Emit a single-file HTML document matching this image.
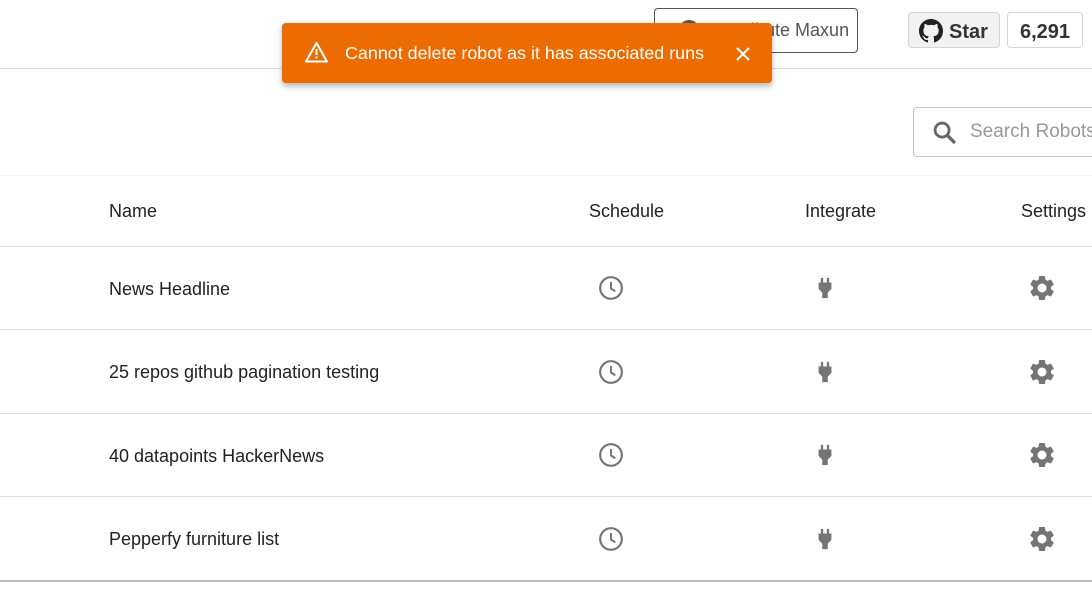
<!DOCTYPE html>
<html><head><meta charset="utf-8"><style>
*{box-sizing:border-box;margin:0;padding:0}
body{width:1092px;height:590px;overflow:hidden;background:#fff;font-family:"Liberation Sans",Roboto,sans-serif;position:relative;color:#222}
.abs{position:absolute}
.hdr{left:0;top:68px;width:1092px;height:1px;background:#ddd}
.contrib{left:654px;top:8px;width:204px;height:45px;border:1px solid #555;border-radius:4px;font-size:18px;color:#555;line-height:43px;padding-left:24px}
.star{left:908px;top:12px;width:92px;height:36px;border:1px solid #d5d5d5;border-radius:4px;background:#f2f2f2;font-weight:bold;font-size:20px;color:#333;line-height:38px}
.count{left:1007px;top:12px;width:76px;height:36px;border:1px solid #d5d5d5;border-radius:4px;background:#fff;font-weight:bold;font-size:20px;color:#333;line-height:38px;text-align:center}
.toast{left:282px;top:23px;width:490px;height:60px;background:#ed6c02;border-radius:4px;box-shadow:0 3px 6px rgba(0,0,0,.3);color:#fff;font-size:17.9px}
.search{left:913px;top:107px;width:200px;height:50px;border:1px solid #c4c4c4;border-radius:4px;font-size:19px;color:#999;line-height:48px;padding-left:56px}
.line{left:0;width:1092px;height:1px;background:#e0e0e0}
.txt{font-size:18px;color:#222}
</style></head><body>
<div class="abs contrib"><span style="display:inline-block;width:20px;height:20px;border-radius:50%;background:#555;vertical-align:-4px;margin-right:8px"></span>Contribute Maxun</div>
<div class="abs star"><svg class="abs" style="left:10px;top:6px" width="24" height="24" viewBox="0 0 16 16"><path fill="#222" d="M8 0C3.58 0 0 3.58 0 8c0 3.540 2.29 6.53 5.47 7.59.4.07.55-.17.55-.38v-1.34c-2.230.48-2.7-1.07-2.7-1.07-.36-.92-.89-1.170-.89-1.17-.73-.5.05-.49.05-.49.8.06 1.23.83 1.23.83.71 1.22 1.87.87 2.33.66.07-.52.28-.87.51-1.07-1.78-.2-3.64-.89-3.64-3.95 0-.87.31-1.59.82-2.15-.08-.2-.36-1.02.08-2.12 0 0 .67-.21 2.2.82a7.6 7.6 0 0 1 4 0c1.53-1.04 2.2-.82 2.2-.82.44 1.1.16 1.92.08 2.12.51.56.82 1.27.82 2.15 0 3.070-1.87 3.75-3.65 3.95.29.25.54.73.54 1.48v2.2c0 .21.15.46.55.38A8.01 8.01 0 0 0 16 8c0-4.42-3.58-8-8-8z"/></svg><span class="abs" style="left:40px;top:0">Star</span></div>
<div class="abs count">6,291</div>
<div class="abs hdr"></div>
<div class="abs toast">
<svg class="abs" style="left:22px;top:18px" width="25" height="22" viewBox="0 0 24 22"><path d="M12 2 L22.5 20.5 H1.5 Z" fill="none" stroke="#fff" stroke-width="2" stroke-linejoin="round"/><rect x="11" y="8" width="2" height="6" fill="#fff"/><rect x="11" y="15.5" width="2" height="2" fill="#fff"/></svg>
<span class="abs" style="left:63px;top:20px">Cannot delete robot as it has associated runs</span>
<svg class="abs" style="left:454px;top:24px" width="14" height="14" viewBox="0 0 14 14"><path d="M1 1L13 13M13 1L1 13" stroke="#fff" stroke-width="2"/></svg>
</div>
<div class="abs search"><svg class="abs" style="left:17px;top:11px" width="28" height="28" viewBox="0 0 24 24"><circle cx="9.5" cy="9.5" r="6" fill="none" stroke="#666" stroke-width="2.4"/><path d="M14 14l6.5 6.5" stroke="#666" stroke-width="2.8"/></svg>Search Robots</div>
<div class="abs line" style="top:175px;background:#f3f3f3"></div>
<div class="abs txt" style="left:109px;top:201px">Name</div>
<div class="abs txt" style="left:589px;top:201px">Schedule</div>
<div class="abs txt" style="left:805px;top:201px">Integrate</div>
<div class="abs txt" style="left:1021px;top:201px">Settings</div>
<div class="abs line" style="top:246px"></div>
<div class="abs line" style="top:329px"></div>
<div class="abs line" style="top:413px"></div>
<div class="abs line" style="top:496px"></div>
<div class="abs line" style="top:580px;height:2px;background:#bbb"></div>

<div class="abs txt" style="left:109px;top:279px">News Headline</div>
<div class="abs txt" style="left:109px;top:362px">25 repos github pagination testing</div>
<div class="abs txt" style="left:109px;top:446px">40 datapoints HackerNews</div>
<div class="abs txt" style="left:109px;top:529px">Pepperfy furniture list</div>

<svg width="0" height="0" style="position:absolute"><defs>
<symbol id="clk" viewBox="0 0 24 24"><circle cx="12" cy="12" r="10" fill="none" stroke="#757575" stroke-width="2"/><path d="M12 6.5V12.5L16 15" fill="none" stroke="#757575" stroke-width="1.8"/></symbol>
<symbol id="plug" viewBox="0 0 24 24"><path fill="#757575" d="M7.5 1h2.5v5h4V1h2.5v5H19v7l-4 4v6H9v-6l-4-4V6h2.5z"/></symbol>
<symbol id="gear" viewBox="0 0 24 24"><path fill="#757575" d="M19.14 12.94c.04-.3.06-.61.06-.94 0-.32-.02-.64-.07-.94l2.030-1.58a.49.49 0 0 0 .12-.61l-1.92-3.32a.49.49 0 0 0-.59-.22l-2.39.96c-.5-.38-1.03-.7-1.62-.94l-.36-2.54a.48.48 0 0 0-.48-.41h-3.84c-.24 0-.43.17-.47.41l-.36 2.54c-.59.24-1.13.57-1.62.94l-2.39-.96a.48.48 0 0 0-.59.22L2.74 8.87c-.12.21-.08.47.12.61l2.030 1.58c-.05.3-.09.63-.09.94s.02.64.07.94l-2.030 1.58a.49.49 0 0 0-.12.61l1.92 3.32c.12.22.37.29.59.22l2.39-.96c.5.38 1.03.7 1.62.94l.36 2.54c.05.24.24.41.48.41h3.84c.24 0 .44-.17.47-.41l.36-2.54c.59-.24 1.13-.56 1.62-.94l2.39.96c.22.08.47 0 .59-.22l1.92-3.32c.12-.22.07-.47-.12-.61l-2.010-1.58zM12 15.6A3.6 3.6 0 1 1 12 8.4a3.6 3.6 0 0 1 0 7.2z"/></symbol>
</defs></svg>

<svg class="abs" style="left:598px;top:275px" width="26" height="26"><use href="#clk"/></svg>
<svg class="abs" style="left:814px;top:276px" width="22" height="24"><use href="#plug"/></svg>
<svg class="abs" style="left:1027px;top:273px" width="30" height="30"><use href="#gear"/></svg>

<svg class="abs" style="left:598px;top:359px" width="26" height="26"><use href="#clk"/></svg>
<svg class="abs" style="left:814px;top:360px" width="22" height="24"><use href="#plug"/></svg>
<svg class="abs" style="left:1027px;top:357px" width="30" height="30"><use href="#gear"/></svg>

<svg class="abs" style="left:598px;top:442px" width="26" height="26"><use href="#clk"/></svg>
<svg class="abs" style="left:814px;top:443px" width="22" height="24"><use href="#plug"/></svg>
<svg class="abs" style="left:1027px;top:440px" width="30" height="30"><use href="#gear"/></svg>

<svg class="abs" style="left:598px;top:526px" width="26" height="26"><use href="#clk"/></svg>
<svg class="abs" style="left:814px;top:527px" width="22" height="24"><use href="#plug"/></svg>
<svg class="abs" style="left:1027px;top:524px" width="30" height="30"><use href="#gear"/></svg>
</body></html>
